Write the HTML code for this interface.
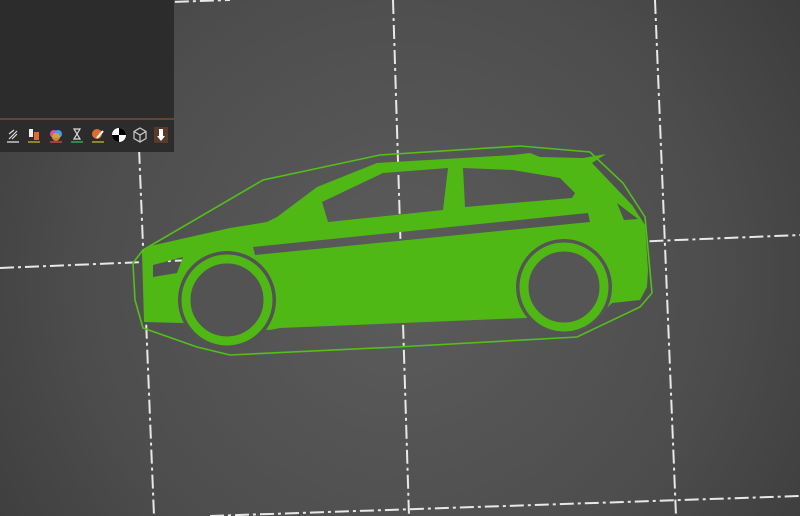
<!DOCTYPE html>
<html><head><style>
html,body{margin:0;padding:0;width:800px;height:516px;overflow:hidden;background:#4a4a4a}
svg{display:block}
</style></head><body>
<svg width="800" height="516" viewBox="0 0 800 516" xmlns="http://www.w3.org/2000/svg">
<defs>
<radialGradient id="bg" cx="400" cy="280" r="520" gradientUnits="userSpaceOnUse">
<stop offset="0" stop-color="#5c5c5c"/><stop offset="0.6" stop-color="#4d4d4d"/><stop offset="1" stop-color="#3a3a3a"/>
</radialGradient>
</defs>
<rect width="800" height="516" fill="url(#bg)"/>
<g stroke="#e8e8e8" stroke-width="2" fill="none" stroke-dasharray="14 4 3 4">
<line x1="133" y1="0" x2="154" y2="516"/>
<line x1="393" y1="0" x2="409" y2="516"/>
<line x1="655" y1="0" x2="676" y2="516"/>
<line x1="0" y1="268" x2="800" y2="235"/>
<line x1="0" y1="8" x2="230" y2="0"/>
<line x1="210" y1="516" x2="800" y2="496"/>
</g>
<path d="M135,300 L133,263 L143,250 L263,180 L380,155 L520,146 L590,152 L623,183 L645,217 L652,293 L640,307 L577,337 L397,347 L230,355 L197,347 L143,328 Z" fill="none" stroke="#52c018" stroke-width="1.6"/>
<path fill="#50b814" fill-rule="evenodd" d="
M144,322 L142,252 L150,246 L230,228 L267,222 L277,217 L317,187 L377,163 L513,155 L530,153 L540,157 L583,158 L606,154 L592,163 L612,184 L632,205 L645,225 L648,270 L647,287 L640,300 L612,303 L600,315 L525,318 L280,328 L270,330 L182,323 Z
M322,202 L328,222 L443,210 L448,168 L383,173 Z
M463,168 L465,207 L572,198 L575,193 L560,178 L513,170 Z
M253,247 L255,255 L590,222 L588,213 Z
M153,265 L183,257 L177,273 L153,277 Z
M617,203 L638,219 L624,220 Z"/>
<circle cx="227" cy="300" r="49" fill="#535353"/>
<circle cx="564" cy="287" r="48" fill="#555555"/>
<circle cx="227" cy="300" r="41" fill="none" stroke="#50b814" stroke-width="9"/>
<circle cx="564" cy="287" r="40" fill="none" stroke="#50b814" stroke-width="9"/>
<rect x="0" y="0" width="174" height="152" fill="#2c2c2c"/>
<line x1="0" y1="119" x2="174" y2="119" stroke="#a0583a" stroke-width="1"/>
<g stroke-width="1.2">
<g transform="translate(13,135)"><path d="M-4,4 L4,-4 M-4,-1 L1,-5 M-1,4 L4,-1" stroke="#ddd" fill="none"/><line x1="-6" y1="7" x2="6" y2="7" stroke="#eee"/></g>
<g transform="translate(34,135)"><rect x="-5" y="-6" width="4" height="8" fill="#eee"/><rect x="0" y="-3" width="5" height="8" fill="#e0683a"/><line x1="-6" y1="7" x2="6" y2="7" stroke="#c8c040"/></g>
<g transform="translate(56,135)"><circle cx="-2" cy="-1" r="4" fill="#e050a0"/><circle cx="2" cy="-1" r="4" fill="#40a0f0"/><circle cx="0" cy="2" r="4" fill="#f0a020" opacity=".8"/><line x1="-6" y1="7" x2="6" y2="7" stroke="#e05050"/></g>
<g transform="translate(77,135)"><path d="M-3,-6 H3 L-3,4 H3 Z" stroke="#ddd" fill="none"/><line x1="-6" y1="7" x2="6" y2="7" stroke="#40c060"/></g>
<g transform="translate(98,135)"><circle cx="-1" cy="-1" r="5" fill="#e06a30"/><path d="M-1,3 L5,-4" stroke="#fff" stroke-width="2"/><line x1="-6" y1="7" x2="6" y2="7" stroke="#d0c030"/></g>
<g transform="translate(119,135)"><circle r="7" fill="#fff"/><path d="M0,-7 A7,7 0 0 1 7,0 L0,0 Z M0,7 A7,7 0 0 1 -7,0 L0,0 Z" fill="#000"/></g>
<g transform="translate(140,135)"><path d="M0,-7 L6,-3.5 V3.5 L0,7 L-6,3.5 V-3.5 Z M-6,-3.5 L0,0 L6,-3.5 M0,0 V7" stroke="#ccc" fill="none"/></g>
<g transform="translate(161,135)"><rect x="-7" y="-8" width="14" height="16" fill="#5a3a2a"/><path d="M-2,-6 H2 V1 H4 L0,6 L-4,1 H-2 Z" fill="#fff"/></g>
</g>
</svg>
</body></html>
